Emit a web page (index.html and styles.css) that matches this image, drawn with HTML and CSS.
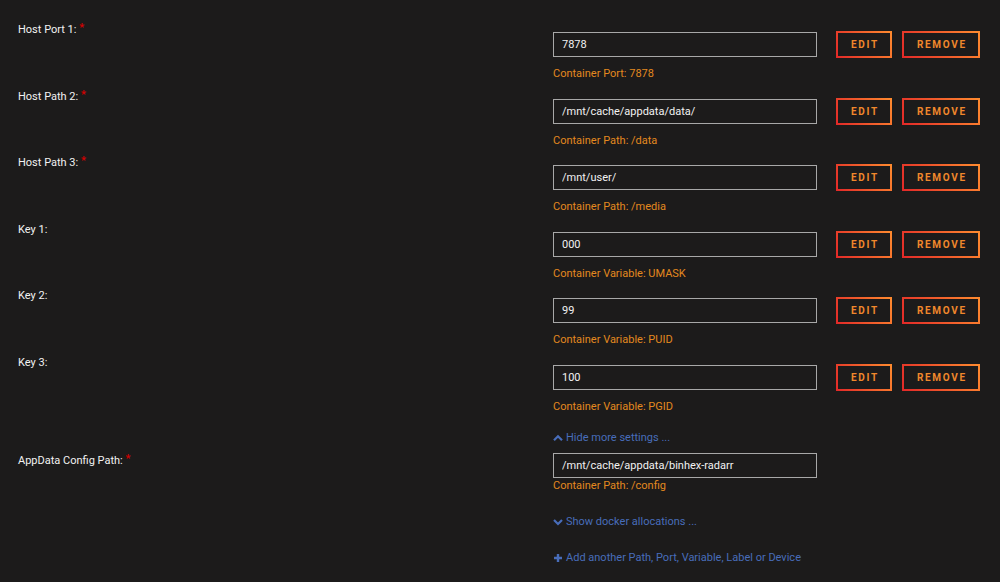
FILE: index.html
```html
<!DOCTYPE html>
<html lang="en">
<head>
    <meta charset="UTF-8">
    <meta name="viewport" content="width=device-width, initial-scale=1.0">
    <title>Container Settings</title>
    <link rel="stylesheet" href="styles.css">
</head>
<body>

    <div class="form">
        <div class="field">
            <label>Host Port 1: <span class="req">*</span></label>
            <div class="control">
                <div class="line">
                    <input type="text" value="7878">
                    <div class="actions">
                        <button class="btn">Edit</button>
                        <button class="btn">Remove</button>
                    </div>
                </div>
                <div class="hint">Container Port: 7878</div>
            </div>
        </div>

        <div class="field">
            <label>Host Path 2: <span class="req">*</span></label>
            <div class="control">
                <div class="line">
                    <input type="text" value="/mnt/cache/appdata/data/">
                    <div class="actions">
                        <button class="btn">Edit</button>
                        <button class="btn">Remove</button>
                    </div>
                </div>
                <div class="hint">Container Path: /data</div>
            </div>
        </div>

        <div class="field">
            <label>Host Path 3: <span class="req">*</span></label>
            <div class="control">
                <div class="line">
                    <input type="text" value="/mnt/user/">
                    <div class="actions">
                        <button class="btn">Edit</button>
                        <button class="btn">Remove</button>
                    </div>
                </div>
                <div class="hint">Container Path: /media</div>
            </div>
        </div>

        <div class="field">
            <label>Key 1:</label>
            <div class="control">
                <div class="line">
                    <input type="text" value="000">
                    <div class="actions">
                        <button class="btn">Edit</button>
                        <button class="btn">Remove</button>
                    </div>
                </div>
                <div class="hint">Container Variable: UMASK</div>
            </div>
        </div>

        <div class="field">
            <label>Key 2:</label>
            <div class="control">
                <div class="line">
                    <input type="text" value="99">
                    <div class="actions">
                        <button class="btn">Edit</button>
                        <button class="btn">Remove</button>
                    </div>
                </div>
                <div class="hint">Container Variable: PUID</div>
            </div>
        </div>

        <div class="field">
            <label>Key 3:</label>
            <div class="control">
                <div class="line">
                    <input type="text" value="100">
                    <div class="actions">
                        <button class="btn">Edit</button>
                        <button class="btn">Remove</button>
                    </div>
                </div>
                <div class="hint">Container Variable: PGID</div>
            </div>
        </div>

        <div class="field toggle-row">
            <span></span>
            <div class="control">
                <a class="link" href="#">
                    <svg class="ico" viewBox="0 0 10 10"><path d="M1 7.2 L5 3.2 L9 7.2" fill="none" stroke="currentColor" stroke-width="2.2"/></svg>
                    Hide more settings ...
                </a>
            </div>
        </div>

        <div class="field plain">
            <label>AppData Config Path: <span class="req">*</span></label>
            <div class="control">
                <input type="text" value="/mnt/cache/appdata/binhex-radarr">
                <div class="hint">Container Path: /config</div>
            </div>
        </div>

        <div class="field extra">
            <span></span>
            <div class="control">
                <a class="link" href="#">
                    <svg class="ico" viewBox="0 0 10 10"><path d="M1 3 L5 7 L9 3" fill="none" stroke="currentColor" stroke-width="2.2"/></svg>
                    Show docker allocations ...
                </a>
            </div>
        </div>

        <div class="field extra">
            <span></span>
            <div class="control">
                <a class="link" href="#">
                    <svg class="ico" viewBox="0 0 10 10"><path d="M5 1 V9 M1 5 H9" fill="none" stroke="currentColor" stroke-width="2.4"/></svg>
                    Add another Path, Port, Variable, Label or Device
                </a>
            </div>
        </div>
    </div>

</body>
</html>
```

FILE: styles.css
```css
body { margin: 0; background: #1c1b1b; color: #f2f2f2; font-family: Roboto, "Open Sans", sans-serif; font-size: 11px; }
.form { padding: 22px 0 0 18px; }
.field { display: grid; grid-template-columns: 535px 1fr; margin-bottom: 7.5px; }
.field label { line-height: 14px; padding-top: 1px; }
.req { color: #d40000; position: relative; top: -2px; font-size: 11px; font-weight: bold; }
.control { padding-top: 9px; }
.line { display: flex; align-items: center; gap: 19px; }
.actions { display: flex; gap: 10px; }
input { box-sizing: border-box; width: 264px; height: 25px; padding: 0 8px; margin: 0; background: #1c1b1b; border: 1px solid #a8a8a8; color: #f2f2f2; font-family: inherit; font-size: 11px; outline: none; }
.btn { box-sizing: border-box; height: 27px; padding: 0 11px 0 13px; border: 2px solid transparent; background: linear-gradient(#1c1b1b, #1c1b1b) padding-box, linear-gradient(60deg, #e22828, #ff8c2f) border-box; color: #f0882c; font-family: inherit; font-size: 10px; font-weight: bold; letter-spacing: 1.7px; text-transform: uppercase; cursor: pointer; }
.hint { margin-top: 9px; line-height: 14px; color: #e3891f; }
.toggle-row { margin-bottom: 7px; }
.toggle-row .control { padding-top: 10px; }
.plain .control { padding-top: 0; }
.plain .hint { margin-top: 1px; }
.plain { margin-bottom: 13px; }
.extra { margin-bottom: 12px; }
.link { color: #486dba; text-decoration: none; line-height: 14px; display: inline-flex; align-items: center; gap: 3px; }
.ico { width: 10px; height: 10px; }
```
